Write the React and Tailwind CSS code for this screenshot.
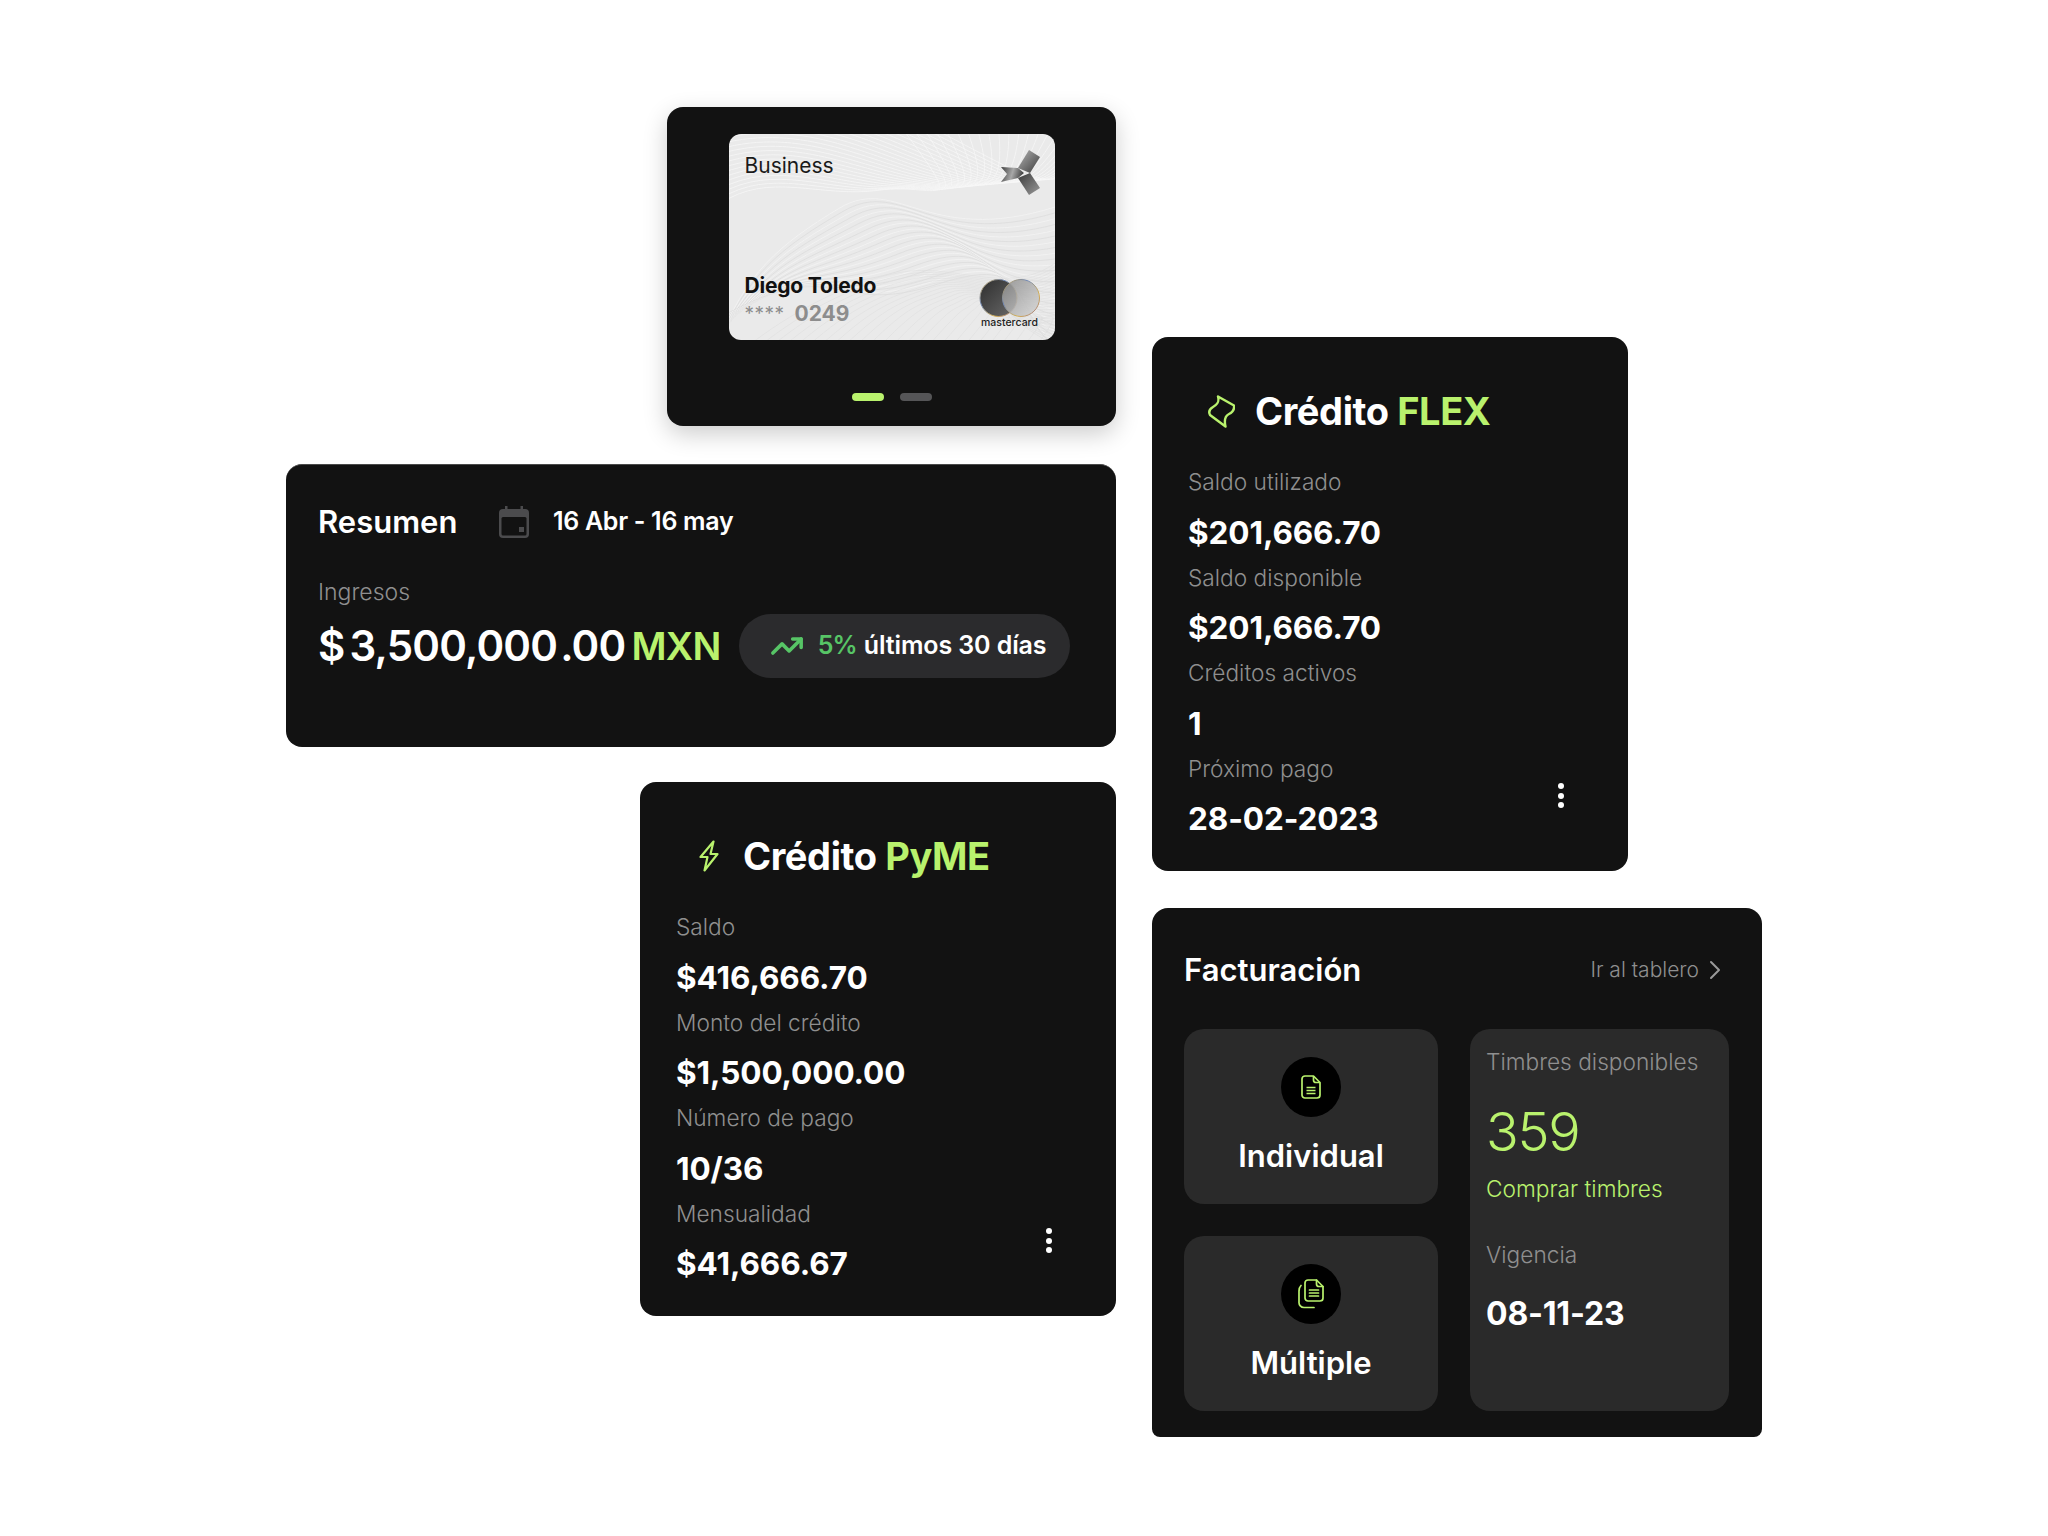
import React from 'react';
import { ChevronRight, TrendingUp } from 'lucide-react';

const font = { fontFamily: 'Inter, "Liberation Sans", sans-serif' };

// thin contour lines of the card texture
const waveLines = Array.from({ length: 26 }, (_, i) => i);

const CardTexture = () => (
  <svg className="absolute inset-0 w-full h-full" viewBox="0 0 326 205" fill="none" preserveAspectRatio="none">
    {waveLines.map((i) => (
      <path
        key={`top-${i}`}
        d={`M-10 ${70 - i * 5} C ${40 + i * 3} ${36 - i * 4}, ${90 + i * 4} ${64 - i * 3}, ${150 + i * 5} ${56 - i} S ${240 + i * 4} ${84 - i * 3}, ${170 + i * 11} -10`}
        stroke="#f8f8f8"
        strokeWidth="0.7"
      />
    ))}
    {waveLines.map((i) => (
      <path
        key={`mid-${i}`}
        d={`M-10 ${208 - i} C ${15 + i * 4} ${140 - i}, ${50 + i * 2} ${110 + i * 3}, ${110 + i * 4} ${74 + i * 3} S ${200 + i * 3} ${118 + i * 3}, 340 ${68 + i * 6}`}
        stroke={i % 2 ? '#d9d9d9' : '#f6f6f6'}
        strokeWidth="0.6"
      />
    ))}
    {waveLines.map((i) => (
      <path
        key={`low-${i}`}
        d={`M${20 + i * 12} 210 C ${60 + i * 12} ${180 - i}, ${110 + i * 8} ${150 + i * 2}, ${170 + i * 5} ${138 + i * 2} S 290 ${170 + i}, 340 ${116 + i * 4}`}
        stroke="#dcdcdc"
        strokeWidth="0.5"
      />
    ))}
  </svg>
);

const BrandMark = () => (
  <svg viewBox="0 0 40 46" className="w-[40px] h-[46px]">
    <defs>
      <linearGradient id="steel" x1="0" y1="0" x2="1" y2="0.2">
        <stop offset="0" stopColor="#3c3c3c" />
        <stop offset="0.55" stopColor="#a8a8a8" />
        <stop offset="1" stopColor="#444444" />
      </linearGradient>
      <linearGradient id="steel2" x1="0" y1="0" x2="1" y2="1">
        <stop offset="0" stopColor="#b4b4b4" />
        <stop offset="1" stopColor="#3a3a3a" />
      </linearGradient>
      <linearGradient id="steel3" x1="0" y1="0" x2="1" y2="1">
        <stop offset="0" stopColor="#3a3a3a" />
        <stop offset="1" stopColor="#9a9a9a" />
      </linearGradient>
    </defs>
    <polygon points="28,0 39,7 29,23 17,18" fill="url(#steel2)" />
    <polygon points="17,28 29,23 39,38 28,45" fill="url(#steel3)" />
    <polygon points="0,17 17,18 23,23 17,28 0,32 6,24" fill="url(#steel)" />
  </svg>
);

const MastercardMark = () => (
  <div className="flex flex-col items-center">
    <svg viewBox="0 0 62 40" className="w-[62px] h-[40px]">
      <defs>
        <linearGradient id="mcLeft" x1="0" y1="0" x2="1" y2="1">
          <stop offset="0" stopColor="#2e2e2e" />
          <stop offset="1" stopColor="#6a6a6a" />
        </linearGradient>
        <linearGradient id="mcRight" x1="0" y1="0" x2="1" y2="1">
          <stop offset="0" stopColor="#8c8c8c" />
          <stop offset="1" stopColor="#d6d6d6" />
        </linearGradient>
        <linearGradient id="mcRim" x1="0" y1="0" x2="1" y2="1">
          <stop offset="0" stopColor="#c9a34e" />
          <stop offset="0.35" stopColor="#6f87b5" />
          <stop offset="0.7" stopColor="#d8b04f" />
          <stop offset="1" stopColor="#8a6a9c" />
        </linearGradient>
      </defs>
      <circle cx="19.5" cy="20" r="18.5" fill="url(#mcLeft)" stroke="url(#mcRim)" strokeWidth="1" />
      <circle cx="42" cy="20" r="18.5" fill="url(#mcRight)" fillOpacity="0.85" stroke="url(#mcRim)" strokeWidth="1" />
    </svg>
    <span className="text-[10.5px] leading-[10px] font-medium text-[#222]">mastercard</span>
  </div>
);

const CalendarIcon = () => (
  <svg viewBox="0 0 32 32" className="w-[32px] h-[32px]">
    <rect x="7" y="0" width="2.5" height="6" fill="#4b4b4d" />
    <rect x="22.5" y="0" width="2.5" height="6" fill="#4b4b4d" />
    <rect x="1" y="3" width="30" height="29" rx="4" fill="#4b4b4d" />
    <rect x="3.5" y="11" width="25" height="18.5" rx="1.5" fill="#121212" />
    <rect x="21" y="21" width="5" height="5" fill="#4b4b4d" />
  </svg>
);

const FlexIcon = () => (
  <svg viewBox="0 0 27 33" className="w-[27px] h-[33px]" fill="none" stroke="#b9f26d" strokeWidth="2.4" strokeLinejoin="round">
    <path d="M10 1.5 L26 10.5 C26.5 14 25 17 21 19 C17 21 16 25 17.5 31.5 L2 20 C0.5 17 1.5 14 5 12 C9.5 9.5 11.5 7 10 1.5 Z" />
  </svg>
);

const BoltIcon = () => (
  <svg viewBox="0 0 20 32" className="w-[20px] h-[32px]" fill="none" stroke="#b9f26d" strokeWidth="2.2" strokeLinejoin="round">
    <path d="M14.5 1.5 L1.5 17 H8.5 L5.5 30.5 L18.5 14 H11.5 Z" />
  </svg>
);

const DocIcon = () => (
  <svg viewBox="0 0 20 24" className="w-[20px] h-[24px]" fill="none" stroke="#b9f26d" strokeWidth="1.7" strokeLinejoin="round">
    <path d="M4 1h8.5L19 7.5V20a3 3 0 0 1-3 3H4a3 3 0 0 1-3-3V4a3 3 0 0 1 3-3Z" />
    <path d="M12.5 1v4a2.5 2.5 0 0 0 2.5 2.5h4" />
    <path d="M5.5 12.5h9M5.5 15.5h9M5.5 18.5h9" />
  </svg>
);

const DocsIcon = () => (
  <svg viewBox="0 0 26 30" className="w-[26px] h-[30px]" fill="none" stroke="#b9f26d" strokeWidth="1.7" strokeLinejoin="round" strokeLinecap="round">
    <path d="M10 1h8.5L25 7.5V19a3 3 0 0 1-3 3H10a3 3 0 0 1-3-3V4a3 3 0 0 1 3-3Z" />
    <path d="M18.5 1v4A2.5 2.5 0 0 0 21 7.5h4" />
    <path d="M11.5 11h9M11.5 14h9M11.5 17h9" />
    <path d="M3 6.5C1.5 8 1 9.5 1 12v11a5 5 0 0 0 5 5.5h10" />
  </svg>
);

const Dots = () => (
  <div className="flex flex-col gap-[3.5px]">
    <span className="w-[6px] h-[6px] rounded-full bg-white" />
    <span className="w-[6px] h-[6px] rounded-full bg-white" />
    <span className="w-[6px] h-[6px] rounded-full bg-white" />
  </div>
);

const CreditCard = ({ icon, name, iconBox, rows }) => (
  <div className="relative w-[476px] h-[534px] rounded-[16px] bg-[#121212] pl-[36px] pt-[51px]">
    <div className="flex items-center h-[46px]">
      <div className={iconBox}>{icon}</div>
      <h2 className="text-[38px] leading-[46px] font-bold tracking-[-0.4px] text-white">
        Crédito <span className="text-[#b9f26d]">{name}</span>
      </h2>
    </div>
    <div className="mt-[31px] flex flex-col gap-[13px]">
      {rows.map((r) => (
        <div key={r.label}>
          <p className="text-[22.7px] leading-[34px] font-light text-[#8f8f8f] mb-[17.5px]">{r.label}</p>
          <p className="text-[31.5px] leading-[32px] font-bold tracking-[-0.1px] text-white -mb-[1px]">{r.value}</p>
        </div>
      ))}
    </div>
    <div className="absolute right-[64px] top-[446px]">
      <Dots />
    </div>
  </div>
);

const App = () => {
  return (
    <div className="w-[2048px] h-[1536px] bg-white overflow-hidden flex pl-[286px] pt-[107px]" style={font}>
      {/* left column */}
      <div className="w-[830px] flex flex-col items-end">
        <div className="w-[449px] h-[319px] rounded-[16px] bg-[#121212] shadow-[0_8px_24px_rgba(0,0,0,0.2)] flex flex-col items-center pt-[27px]">
          <div className="relative w-[326px] h-[206px] rounded-[12px] bg-[#eaeaea] overflow-hidden">
            <CardTexture />
            <div className="relative h-full pl-[16px] pr-[14px] pt-[17px] pb-[12px] flex flex-col justify-between">
              <div className="flex justify-between items-start">
                <span className="text-[21px] leading-[30px] text-[#1a1a1a]">Business</span>
                <div className="-mt-[1px]">
                  <BrandMark />
                </div>
              </div>
              <div className="flex justify-between items-end">
                <div>
                  <p className="text-[21px] leading-[28px] font-bold tracking-[-0.2px] text-[#111]">Diego Toledo</p>
                  <p className="text-[21px] leading-[28px] font-bold text-[#8d8d8d] flex items-center">
                    <span className="font-normal text-[19px] w-[50px] tracking-[0.5px]">****</span>0249
                  </p>
                </div>
                <MastercardMark />
              </div>
            </div>
          </div>
          <div className="mt-[53px] flex gap-[16px]">
            <span className="w-[32px] h-[8px] rounded-full bg-[#b9f26d]" />
            <span className="w-[32px] h-[8px] rounded-full bg-[#555557]" />
          </div>
        </div>

        <div className="mt-[38px] w-[830px] h-[283px] rounded-[16px] border-t border-[#4a4a4a] bg-[#121212] pl-[32px] pt-[36px]">
          <div className="flex items-center h-[42px]">
            <h2 className="text-[31px] font-semibold text-white w-[180px]">Resumen</h2>
            <CalendarIcon />
            <span className="ml-[23px] text-[25px] font-semibold tracking-[-0.3px] text-white">16 Abr - 16 may</span>
          </div>
          <p className="mt-[31px] text-[23px] leading-[36px] font-light text-[#8f8f8f]">Ingresos</p>
          <div className="mt-[4px] flex items-center">
            <span className="text-[42px] leading-[64px] font-semibold tracking-[-0.8px] text-white">
              $<span className="ml-[5px]">3,500,000</span>
              <span className="ml-[3px]">.00</span>
            </span>
            <span className="ml-[6px] text-[38px] leading-[64px] font-semibold tracking-[-0.6px] text-[#b9f26d]">MXN</span>
            <div className="ml-[18px] h-[64px] w-[331px] rounded-full bg-[#2b2b2d] flex items-center pl-[31px]">
              <TrendingUp size={34} color="#57c566" strokeWidth={2.5} />
              <span className="ml-[14px] text-[25px] font-semibold tracking-[-1px] text-[#57c566]">5%</span>
              <span className="ml-[7px] text-[25px] font-semibold tracking-[-0.1px] text-white">últimos 30 días</span>
            </div>
          </div>
        </div>

        <div className="mt-[35px]">
          <CreditCard
            name="PyME"
            iconBox="w-[67px] pl-[23px]"
            icon={<BoltIcon />}
            rows={[
              { label: 'Saldo', value: '$416,666.70' },
              { label: 'Monto del crédito', value: '$1,500,000.00' },
              { label: 'Número de pago', value: '10/36' },
              { label: 'Mensualidad', value: '$41,666.67' },
            ]}
          />
        </div>
      </div>

      {/* right column */}
      <div className="ml-[36px] pt-[230px] flex flex-col gap-[37px]">
        <CreditCard
          name="FLEX"
          iconBox="w-[67px] pl-[20px]"
          icon={<FlexIcon />}
          rows={[
            { label: 'Saldo utilizado', value: '$201,666.70' },
            { label: 'Saldo disponible', value: '$201,666.70' },
            { label: 'Créditos activos', value: '1' },
            { label: 'Próximo pago', value: '28-02-2023' },
          ]}
        />

        <div className="w-[610px] h-[529px] rounded-t-[16px] rounded-b-[8px] bg-[#121212] pl-[32px] pr-[33px] pt-[40px]">
          <div className="flex items-center justify-between h-[44px]">
            <h2 className="text-[31px] font-semibold text-white">Facturación</h2>
            <div className="flex items-center -mr-[2px] text-[21px] font-light text-[#8f8f8f]">
              Ir al tablero
              <ChevronRight size={32} color="#9a9a9a" strokeWidth={1.5} />
            </div>
          </div>
          <div className="mt-[37px] flex gap-[32px]">
            <div className="w-[254px] flex flex-col gap-[32px]">
              <div className="h-[175px] rounded-[20px] bg-[#2a2a2a] flex flex-col items-center pt-[28px]">
                <div className="w-[60px] h-[60px] rounded-full bg-black flex items-center justify-center">
                  <DocIcon />
                </div>
                <span className="mt-[19px] text-[31px] leading-[40px] font-semibold text-white">Individual</span>
              </div>
              <div className="h-[175px] rounded-[20px] bg-[#2a2a2a] flex flex-col items-center pt-[28px]">
                <div className="w-[60px] h-[60px] rounded-full bg-black flex items-center justify-center">
                  <DocsIcon />
                </div>
                <span className="mt-[19px] text-[31px] leading-[40px] font-semibold text-white">Múltiple</span>
              </div>
            </div>
            <div className="w-[259px] h-[382px] rounded-[20px] bg-[#2a2a2a] pl-[16px] pt-[16px]">
              <p className="text-[22.7px] leading-[34px] font-light text-[#8f8f8f]">Timbres disponibles</p>
              <p className="mt-[18px] text-[54px] leading-[70px] font-light tracking-[-1.2px] text-[#b9f26d]">359</p>
              <p className="mt-[5px] text-[22.7px] leading-[34px] font-light text-[#b9f26d]">Comprar timbres</p>
              <p className="mt-[32px] text-[22.7px] leading-[34px] font-light text-[#8f8f8f]">Vigencia</p>
              <p className="mt-[20px] text-[32px] leading-[44px] font-bold tracking-[-0.2px] text-white">08-11-23</p>
            </div>
          </div>
        </div>
      </div>
    </div>
  );
};

export default App;
